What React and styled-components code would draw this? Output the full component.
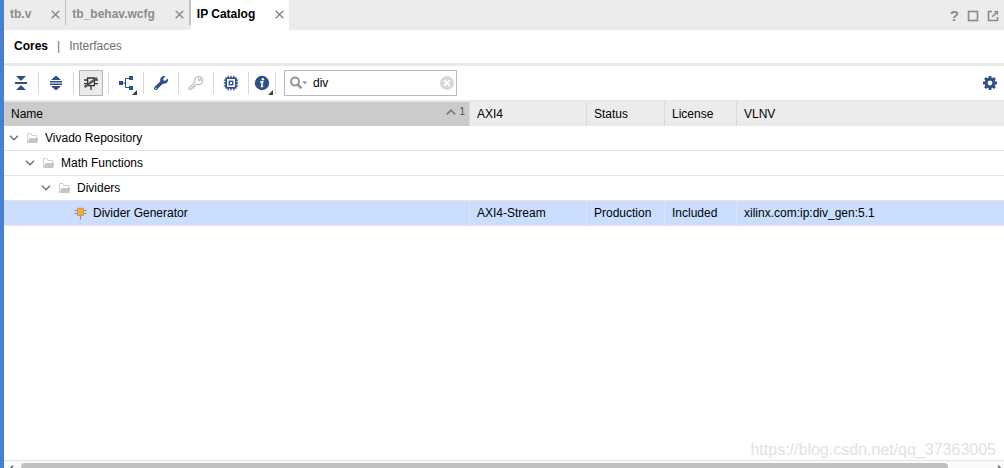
import React, { useState } from "react";
import styled, { createGlobalStyle } from "styled-components";
import { FaWrench } from "react-icons/fa";

const GlobalStyle = createGlobalStyle`
  * {
    box-sizing: border-box;
  }
  body {
    margin: 0;
    background: #fff;
    color: #000;
    font-family: "Liberation Sans", Arial, sans-serif;
    font-size: 12px;
    line-height: 16px;
  }
  button,
  input {
    font: inherit;
    color: inherit;
  }
`;

const Panel = styled.main`
  position: relative;
  display: flex;
  flex-direction: column;
  height: 100vh;
  border-left: 4px solid #4a7fce;
  overflow: hidden;
`;

const TabBar = styled.header`
  display: flex;
  justify-content: space-between;
  height: 30px;
  flex: none;
  background: #ececec;
`;

const TabList = styled.div`
  display: flex;
`;

const Tab = styled.div`
  display: flex;
  align-items: flex-start;
  gap: 20px;
  padding: 6px 5px 0 6px;
  height: ${(props) => (props.$active ? 30 : 25)}px;
  background: ${(props) => (props.$active ? "#fff" : "transparent")};
  color: ${(props) => (props.$active ? "#000" : "#8c8c8c")};
  border-right: ${(props) => props.$divider}px solid #c0c0c0;
  font-weight: bold;
`;

const PlainButton = styled.button`
  display: flex;
  align-items: center;
  justify-content: center;
  padding: 0;
  border: 0;
  background: none;
  cursor: pointer;
`;

const TabLabel = styled(PlainButton)`
  font-weight: bold;
`;

const CloseButton = styled(PlainButton)`
  padding-top: 4px;
  color: #8c8c8c;
`;

const WindowButtons = styled.div`
  display: flex;
  align-items: center;
  gap: 8px;
  padding: 2px 5px 0 0;
  color: #8a8a8a;
`;

const HelpButton = styled(PlainButton)`
  font-size: 15px;
  font-weight: bold;
`;

const ViewBar = styled.nav`
  display: flex;
  align-items: center;
  gap: 9px;
  height: 36px;
  flex: none;
  padding: 0 10px 2px;
  border-bottom: 3px solid #e8e8e8;
  color: #6e6e6e;
`;

const ViewLink = styled.a`
  color: ${(props) => (props.$active ? "#000" : "#6e6e6e")};
  font-weight: ${(props) => (props.$active ? "bold" : "normal")};
  text-decoration: none;
`;

const Toolbar = styled.div`
  display: flex;
  align-items: center;
  height: 36px;
  flex: none;
  border-bottom: 2px solid #e8e8e8;
  color: #2f4f87;
`;

const ToolCell = styled.div`
  display: flex;
  align-items: center;
  justify-content: center;
  width: ${(props) => (props.$narrow ? 27 : 35)}px;
  height: 22px;
  border-right: 1px solid #d9d9d9;
`;

const ToolButton = styled(PlainButton)`
  position: relative;
  flex: none;
  width: 24px;
  height: 26px;
  border: 1px solid ${(props) => (props.$pressed ? "#b4b4b4" : "transparent")};
  background: ${(props) => (props.$pressed ? "#ebebeb" : "none")};
`;

const MenuCorner = styled.span`
  position: absolute;
  right: 0;
  bottom: 0;
  border-left: 5px solid transparent;
  border-bottom: 5px solid #404040;
`;

const SearchBox = styled.label`
  display: flex;
  align-items: center;
  gap: 5px;
  width: 173px;
  height: 26px;
  margin-left: 8px;
  padding: 0 2px 0 5px;
  border: 1px solid #b8b8b8;
  color: #000;
`;

const SearchInput = styled.input`
  flex: 1;
  min-width: 0;
  padding: 0;
  border: 0;
  outline: 0;
  background: none;
`;

const SettingsButton = styled(ToolButton)`
  margin-left: auto;
  margin-right: 2px;
`;

const TableArea = styled.div`
  flex: 1;
  min-height: 0;
  overflow: hidden;
`;

const CatalogTable = styled.table`
  width: 100%;
  table-layout: fixed;
  border-collapse: separate;
  border-spacing: 0;
`;

const Th = styled.th`
  height: 24px;
  padding: 0 0 0 7px;
  background: ${(props) => (props.$sorted ? "#cbcbcb" : "#ececec")};
  border-right: 1px solid #d9d9d9;
  font-weight: normal;
  text-align: left;

  &:last-child {
    border-right: 0;
  }
`;

const SortedHeading = styled.div`
  display: flex;
  align-items: center;
  justify-content: space-between;
  padding-right: 4px;
`;

const SortMark = styled.span`
  display: flex;
  align-items: center;
  gap: 3px;
  height: 20px;
  margin-top: -4px;
  color: #6b4a24;
  font-size: 10px;
`;

const Row = styled.tr`
  background: ${(props) => (props.$selected ? "#cbdeff" : "#fff")};
`;

const Td = styled.td`
  height: 25px;
  padding: 0 0 0 7px;
  border-bottom: 1px solid #e3e3e3;
  border-right: ${(props) => (props.$lined ? "1px solid #dfe3ea" : "0")};
  white-space: nowrap;
`;

const NameCell = styled(Td)`
  padding-left: ${(props) => 4 + props.$level * 16}px;
`;

const TreeLabel = styled.div`
  display: flex;
  align-items: center;
  gap: 6px;
`;

const Twisty = styled(PlainButton)`
  width: 12px;
  height: 12px;
`;

const TwistySpace = styled.span`
  width: 12px;
`;

const ScrollBar = styled.div`
  display: flex;
  height: 8px;
  flex: none;
  border-top: 1px solid #e3e3e3;
  background: #fafafa;
  overflow: hidden;
`;

const ScrollArrow = styled(PlainButton)`
  justify-content: ${(props) => (props.$end ? "flex-end" : "flex-start")};
  width: 17px;
  height: 16px;
  padding: 2px ${(props) => (props.$end ? 1 : 4)}px 0;
  color: #606060;
`;

const ScrollTrack = styled.div`
  flex: 1;
  padding-top: 2px;
`;

const ScrollThumb = styled.div`
  width: 96%;
  height: 12px;
  border-radius: 4px;
  background: #c0c0c0;
`;

const Watermark = styled.span`
  position: absolute;
  right: 8px;
  bottom: 9px;
  color: #e2e2e2;
  font-size: 16px;
  line-height: 18px;
  pointer-events: none;
`;

const CloseIcon = () => (
  <svg width="9" height="9" viewBox="0 0 9 9" stroke="currentColor" strokeWidth="1.5">
    <path d="M0.7 0.7 L8.3 8.3 M8.3 0.7 L0.7 8.3" />
  </svg>
);

const MaximizeIcon = () => (
  <svg width="12" height="12" viewBox="0 0 12 12" fill="none" stroke="currentColor" strokeWidth="1.6">
    <rect x="1.5" y="1.5" width="9" height="9" />
  </svg>
);

const FloatIcon = () => (
  <svg width="12" height="12" viewBox="0 0 12 12" fill="none" stroke="currentColor" strokeWidth="1.6">
    <path d="M5 1.5 H1.5 V10.5 H10.5 V7" />
    <path d="M5.2 6.8 L9.5 2.5" />
    <path d="M6.8 1 H11 V5.2 Z" fill="currentColor" stroke="none" />
  </svg>
);

const CollapseIcon = () => (
  <svg width="14" height="16" viewBox="0 0 14 16" fill="currentColor">
    <path d="M2 1 H12 L7.5 5.5 H6.5 Z M1 7 H13 V9 H1 Z M6.5 10.5 H7.5 L12 15 H2 Z" />
  </svg>
);

const ExpandIcon = () => (
  <svg width="14" height="16" viewBox="0 0 14 16" fill="currentColor">
    <path d="M6.4 1 H7.6 L12 5 H2 Z M1 6 H13 V7.5 H1 Z M1 8.5 H13 V10 H1 Z M2 11 H12 L7.6 15 H6.4 Z" />
  </svg>
);

const HideIpIcon = () => (
  <svg width="16" height="16" viewBox="0 0 16 16" fill="none" stroke="#333" strokeWidth="1.3">
    <path d="M4.6 3 H11.4 V10.6 H4.6 Z M1 5 H4.6 M1 8.6 H4.6 M11.4 5 H15 M11.4 8.6 H15 M8 10.6 V15" />
    <path d="M1.5 12 L14 3" strokeWidth="2.2" stroke="#555" />
  </svg>
);

const HierarchyIcon = () => (
  <svg width="16" height="16" viewBox="0 0 16 16">
    <path d="M1 6 H5 V10 H1 Z M11 1 H15 V5 H11 Z M11 11 H15 V15 H11 Z" fill="currentColor" />
    <path d="M5 8 H7.5 M11 3.5 H7.5 V12.5 H11" fill="none" stroke="currentColor" />
  </svg>
);

const KeyIcon = () => (
  <svg width="16" height="16" viewBox="0 0 16 16" fill="none" stroke="#bdbdbd" strokeWidth="1.2">
    <path d="M7 7.2 A4 4 0 1 1 9 9.2 L8 10.2 H6.5 V11.8 H5 V13.2 H3.6 L2.8 14.4 H1.2 V12.8 Z" />
    <circle cx="11.6" cy="4.6" r="1.1" />
  </svg>
);

const ChipIcon = () => (
  <svg width="16" height="16" viewBox="0 0 16 16" fill="none" stroke="currentColor">
    <rect x="3.2" y="3.2" width="9.6" height="9.6" strokeWidth="1.7" />
    <rect x="6.3" y="6.3" width="3.4" height="3.4" strokeWidth="1.4" />
    <path
      d="M5.2 0.8 V3 M8 0.8 V3 M10.8 0.8 V3 M5.2 13 V15.2 M8 13 V15.2 M10.8 13 V15.2 M0.8 5.2 H3 M0.8 8 H3 M0.8 10.8 H3 M13 5.2 H15.2 M13 8 H15.2 M13 10.8 H15.2"
      strokeWidth="1.3"
    />
  </svg>
);

const InfoIcon = () => (
  <svg width="16" height="16" viewBox="0 0 16 16">
    <circle cx="8" cy="8" r="7.2" fill="currentColor" />
    <circle cx="8.9" cy="4.3" r="1.2" fill="#fff" />
    <path d="M6.2 6.9 H8.6 L7.5 11.4 H9.2" fill="none" stroke="#fff" strokeWidth="1.6" />
  </svg>
);

const GearIcon = () => (
  <svg width="16" height="16" viewBox="0 0 16 16">
    <circle cx="8" cy="8" r="3.9" fill="none" stroke="currentColor" strokeWidth="3" />
    {[0, 45, 90, 135].map((angle) => (
      <path
        key={angle}
        d="M6.6 1 H9.4 V3.5 H6.6 Z M6.6 12.5 H9.4 V15 H6.6 Z"
        fill="currentColor"
        transform={`rotate(${angle} 8 8)`}
      />
    ))}
  </svg>
);

const SearchIcon = () => (
  <svg width="18" height="14" viewBox="0 0 18 14" fill="none" stroke="#969696">
    <circle cx="5" cy="5.6" r="4" strokeWidth="2" />
    <path d="M7.8 8.6 L11.4 12.4" strokeWidth="2.4" />
    <path d="M12 5.5 H17.4 L14.7 8.2 Z" fill="#969696" stroke="none" />
  </svg>
);

const ClearIcon = () => (
  <svg width="14" height="14" viewBox="0 0 14 14">
    <circle cx="7" cy="7" r="7" fill="#d8d8d8" />
    <path d="M4.2 4.2 L9.8 9.8 M9.8 4.2 L4.2 9.8" stroke="#fff" strokeWidth="1.8" />
  </svg>
);

const SortIcon = () => (
  <svg width="10" height="6" viewBox="0 0 10 6" fill="none" stroke="#7a7a7a" strokeWidth="1.7">
    <path d="M0.8 5.3 L5 1.2 L9.2 5.3" />
  </svg>
);

const ChevronIcon = () => (
  <svg width="10" height="6" viewBox="0 0 10 6" fill="none" stroke="#6e6e6e" strokeWidth="1.4">
    <path d="M1 0.8 L5 4.8 L9 0.8" />
  </svg>
);

const FolderIcon = () => (
  <svg width="13" height="12" viewBox="0 0 13 12">
    <path d="M1.5 10 V1.5 H5 L6 3.5 H10.5 V6" fill="none" stroke="#cfcfcf" />
    <path d="M3.6 6 H12.4 L11.4 11 H1.2 Z" fill="#c6c6c6" />
  </svg>
);

const IpIcon = () => (
  <svg width="13" height="13" viewBox="0 0 13 13">
    <path d="M0.5 3.5 H12.5 M0.5 6.5 H12.5 M6.5 8 V12.5" stroke="#8c8c8c" strokeWidth="1.2" />
    <rect x="3.5" y="1.2" width="6" height="7.3" fill="#fbab2a" stroke="#b9975f" strokeWidth="0.8" />
  </svg>
);

const ArrowLeft = () => (
  <svg width="6" height="10" viewBox="0 0 6 10" fill="none" stroke="currentColor" strokeWidth="1.6">
    <path d="M5 0.8 L1 5 L5 9.2" />
  </svg>
);

const ArrowRight = () => (
  <svg width="6" height="10" viewBox="0 0 6 10" fill="none" stroke="currentColor" strokeWidth="1.6">
    <path d="M1 0.8 L5 5 L1 9.2" />
  </svg>
);

const tabs = [
  { name: "tb.v", divider: 1 },
  { name: "tb_behav.wcfg", divider: 2 },
  { name: "IP Catalog", divider: 0, active: true },
];

const tools = [
  { label: "Collapse All", icon: <CollapseIcon /> },
  { label: "Expand All", icon: <ExpandIcon /> },
  { label: "Hide Incompatible IP", icon: <HideIpIcon />, pressed: true },
  { label: "Group By", icon: <HierarchyIcon />, menu: true },
  { label: "Customize IP", icon: <FaWrench size={14} /> },
  { label: "License Status", icon: <KeyIcon /> },
  { label: "Compatible Families", icon: <ChipIcon /> },
  { label: "IP Information", icon: <InfoIcon />, menu: true, narrow: true },
];

const folders = ["Vivado Repository", "Math Functions", "Dividers"];

const App = () => {
  const [query, setQuery] = useState("div");

  return (
    <Panel>
      <GlobalStyle />
      <TabBar>
        <TabList>
          {tabs.map((tab) => (
            <Tab key={tab.name} $active={tab.active} $divider={tab.divider}>
              <TabLabel>{tab.name}</TabLabel>
              <CloseButton aria-label={"Close " + tab.name}>
                <CloseIcon />
              </CloseButton>
            </Tab>
          ))}
        </TabList>
        <WindowButtons>
          <HelpButton aria-label="Help">?</HelpButton>
          <PlainButton aria-label="Maximize">
            <MaximizeIcon />
          </PlainButton>
          <PlainButton aria-label="Float">
            <FloatIcon />
          </PlainButton>
        </WindowButtons>
      </TabBar>

      <ViewBar>
        <ViewLink href="#cores" $active>
          Cores
        </ViewLink>
        <span>|</span>
        <ViewLink href="#interfaces">Interfaces</ViewLink>
      </ViewBar>

      <Toolbar>
        {tools.map((tool) => (
          <ToolCell key={tool.label} $narrow={tool.narrow}>
            <ToolButton aria-label={tool.label} $pressed={tool.pressed}>
              {tool.icon}
              {tool.menu && <MenuCorner />}
            </ToolButton>
          </ToolCell>
        ))}
        <SearchBox>
          <SearchIcon />
          <SearchInput
            aria-label="Search"
            value={query}
            onChange={(e) => setQuery(e.target.value)}
          />
          <PlainButton aria-label="Clear search" onClick={() => setQuery("")}>
            <ClearIcon />
          </PlainButton>
        </SearchBox>
        <SettingsButton aria-label="Settings">
          <GearIcon />
        </SettingsButton>
      </Toolbar>

      <TableArea>
        <CatalogTable>
          <colgroup>
            <col width="466" />
            <col width="117" />
            <col width="78" />
            <col width="72" />
            <col />
          </colgroup>
          <thead>
            <tr>
              <Th $sorted>
                <SortedHeading>
                  Name
                  <SortMark>
                    <SortIcon />1
                  </SortMark>
                </SortedHeading>
              </Th>
              <Th>AXI4</Th>
              <Th>Status</Th>
              <Th>License</Th>
              <Th>VLNV</Th>
            </tr>
          </thead>
          <tbody>
            {folders.map((folder, level) => (
              <Row key={folder}>
                <NameCell colSpan={5} $level={level}>
                  <TreeLabel>
                    <Twisty aria-label={"Collapse " + folder}>
                      <ChevronIcon />
                    </Twisty>
                    <FolderIcon />
                    {folder}
                  </TreeLabel>
                </NameCell>
              </Row>
            ))}
            <Row $selected>
              <NameCell $level={3} $lined>
                <TreeLabel>
                  <TwistySpace />
                  <IpIcon />
                  Divider Generator
                </TreeLabel>
              </NameCell>
              <Td $lined>AXI4-Stream</Td>
              <Td $lined>Production</Td>
              <Td $lined>Included</Td>
              <Td>xilinx.com:ip:div_gen:5.1</Td>
            </Row>
          </tbody>
        </CatalogTable>
      </TableArea>

      <ScrollBar>
        <ScrollArrow aria-label="Scroll left">
          <ArrowLeft />
        </ScrollArrow>
        <ScrollTrack>
          <ScrollThumb />
        </ScrollTrack>
        <ScrollArrow aria-label="Scroll right" $end>
          <ArrowRight />
        </ScrollArrow>
      </ScrollBar>
      <Watermark>https://blog.csdn.net/qq_37363005</Watermark>
    </Panel>
  );
};

export default App;
